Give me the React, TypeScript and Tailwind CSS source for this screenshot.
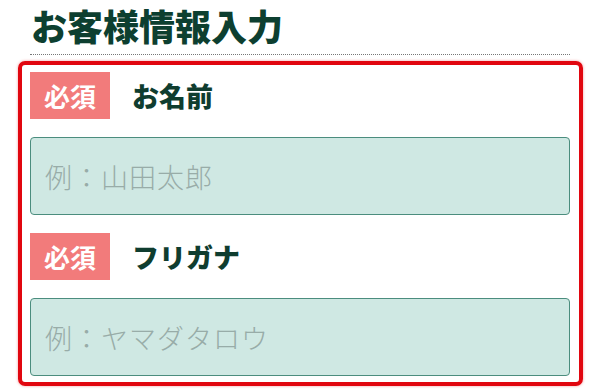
import React from 'react';

const font = "font-['Noto_Sans_CJK_JP','Noto_Sans',sans-serif]";

interface FieldProps {
    label: string;
    placeholder: string;
}

const Field: React.FC<FieldProps> = ({ label, placeholder }) => {
    return (
        <div className="flex flex-col gap-[18px]">
            <div className="flex items-center">
                <span className="w-[80px] h-[47px] flex items-center justify-center bg-[#f27b7b] text-white text-[26px] font-bold leading-none">
                    必須
                </span>
                <span className="ml-[22px] text-[27px] font-black text-[#0f3d2f] leading-none">{label}</span>
            </div>
            <input
                type="text"
                placeholder={placeholder}
                className="h-[78px] w-full rounded-[4px] border-[1.5px] border-[#4b8d7e] bg-[#cfe8e3] px-[14px] text-[27px] font-light tracking-[1px] text-[#333] placeholder:text-[#98aca8] outline-none"
            />
        </div>
    );
};

const App: React.FC = () => {
    return (
        <div className={`w-[600px] h-[389px] bg-white overflow-hidden ${font}`}>
            <div className="px-[30px] pt-[3px]">
                <h1 className="text-[36px] font-black text-[#0d3f30] leading-[44px] pl-[1px] pb-[7px] border-b border-dotted border-[#777]">
                    お客様情報入力
                </h1>
            </div>
            <div className="mx-[18px] mt-[6px] w-[565px] rounded-[7px] border-[4px] border-[#e1060f] shadow-[0_0_3px_rgba(225,6,15,0.4)] pl-[8px] pr-[9px] pt-[7px] pb-[6px] flex flex-col gap-[18px]">
                <Field label="お名前" placeholder="例：山田太郎" />
                <Field label="フリガナ" placeholder="例：ヤマダタロウ" />
            </div>
        </div>
    );
};

export default App;
